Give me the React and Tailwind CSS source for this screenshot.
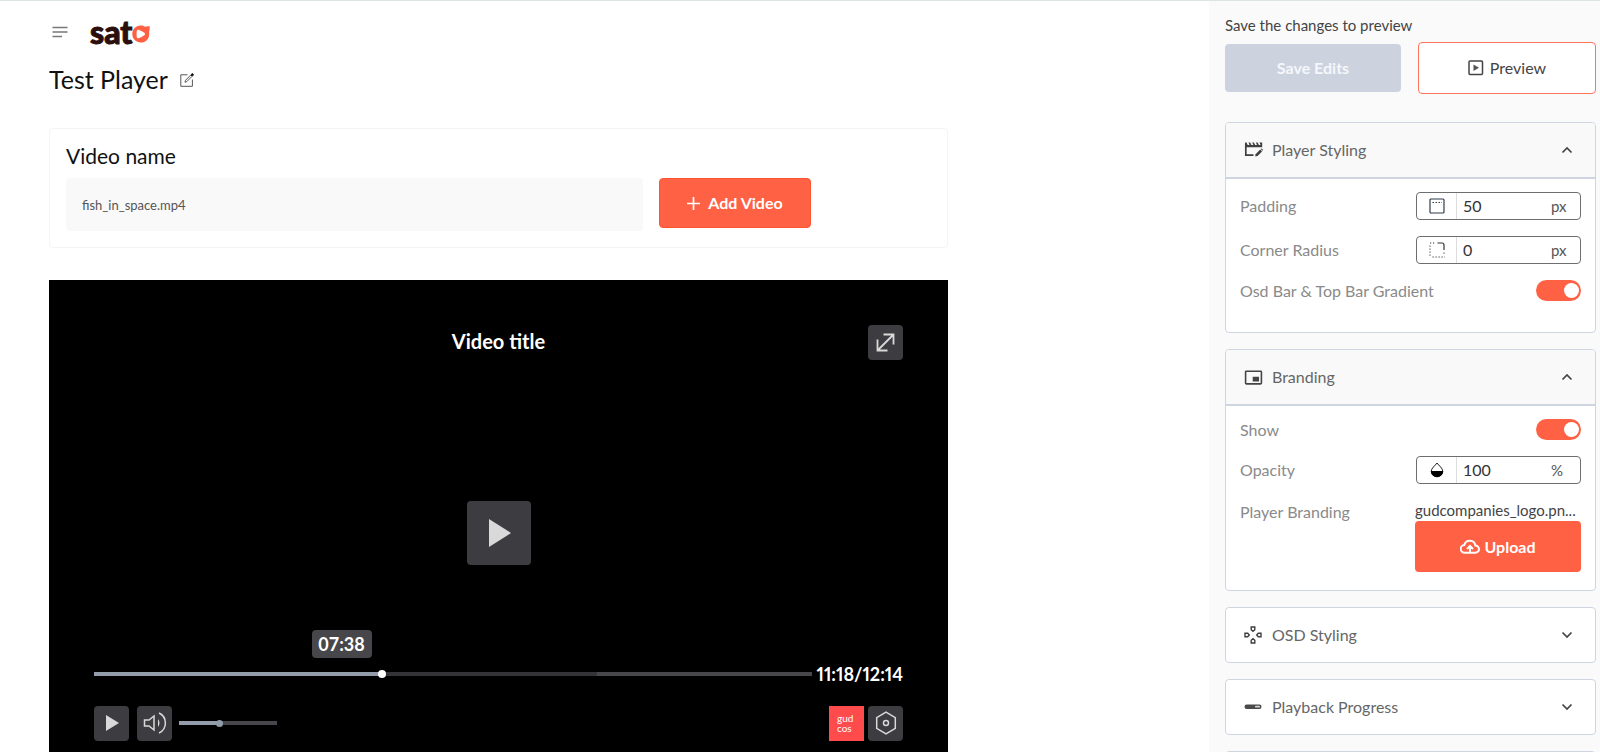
import { useState } from 'react'
import { MdPictureInPictureAlt } from 'react-icons/md'

const iconButton = 'flex size-[35px] items-center justify-center rounded-sm bg-[#3c3c41] text-[#d9d9d9]'

function MenuIcon() {
  return (
    <svg width="16" height="12" viewBox="0 0 16 12" stroke="#777" strokeWidth="1.3">
      <path d="M0.5 1.5h15M0.5 6h15M0.5 10.5h9.5" />
    </svg>
  )
}

function Logo() {
  return (
    <a href="#" aria-label="sato" className="flex h-8 items-center text-[32px] leading-8 font-black text-[#2a0f0d] [-webkit-text-stroke:1px_#2a0f0d]">
      sat
      <svg width="18" height="18" viewBox="0 0 18 18" className="mt-1">
        <path
          fill="#ff6044"
          fillRule="evenodd"
          d="M8.5 0.6c2 0 3.400 .5 4.400 1.100L17.600 1v4.200c-.6 1-.4 2-.4 4 0 4.800-3.600 8.300-8.400 8.300S.3 14 .3 9.100 3.800 .6 8.500 .6zM7 4.900c-1.200-.4-2.200.3-2.300 1.500-.2 1.800-.2 3.500 0 5.300.2 1.300 1.400 1.900 2.600 1.400 1.900-.8 3.600-1.700 5-2.800 1-.8 1-1.800 0-2.600C10.800 6.500 9 5.600 7 4.900z"
        />
      </svg>
    </a>
  )
}

function EditIcon() {
  return (
    <svg width="14" height="14" viewBox="0 0 14 14" fill="none" stroke="#555">
      <path d="M7.500 1.800H.8v11.500h11.600V6.500" />
      <path d="M5 9.300l.5-2L10.800 2l1.300 1.300-5.300 5.300z" />
      <path d="M11 1.800l1.400-1.300 1.200 1.200-1.300 1.400z" fill="#111" stroke="#111" />
    </svg>
  )
}

function PreviewIcon() {
  return (
    <svg width="16" height="16" viewBox="0 0 16 16">
      <rect x="1" y="1" width="13.500" height="13.500" rx="1" fill="none" stroke="#444" strokeWidth="1.500" />
      <path d="M5.500 4.500v6.500L11 7.750z" fill="#555" />
    </svg>
  )
}

function ClapperIcon() {
  return (
    <svg width="20" height="18" viewBox="0 0 20 18" fill="none">
      <path d="M1.800 3v11.200h7.700" stroke="#3f3f3f" strokeWidth="1.700" />
      <path d="M1 1.500h1.500l1.200 2.500h1.800L4.500 1.500h1.700L7.500 4h1.800L8.200 1.500h1.700L11.200 4H13l-1.100-2.500h1.700L14.900 4h1.700l-1.100-2.500h2.700V6.300H1z" fill="#3f3f3f" />
      <path d="M11.300 15.500l.3-2.300 4.600-4.600 1.900 1.900-4.600 4.600z" fill="#3f3f3f" />
      <path d="M16.800 8l.8-.6 1.600 1.600-.7.800z" fill="#3f3f3f" />
    </svg>
  )
}

function DpadIcon() {
  return (
    <svg width="18" height="18" viewBox="0 0 18 18" fill="none" stroke="#3f3f3f" strokeWidth="1.400">
      <path d="M7.200 1h3.600v2.700L9 5.300 7.200 3.700z" />
      <path d="M7.200 17h3.600v-2.700L9 12.700l-1.800 1.600z" />
      <path d="M1 7.200v3.600h2.700L5.300 9 3.700 7.200z" />
      <path d="M17 7.200v3.600h-2.700L12.700 9l1.600-1.800z" />
    </svg>
  )
}

function ProgressIcon() {
  return (
    <svg width="18" height="6" viewBox="0 0 18 6">
      <rect x=".5" y=".5" width="17" height="4.500" rx="2.200" fill="#4a4a4a" />
      <rect x="11" y="1.800" width="5" height="1.800" rx=".9" fill="#d4d4d4" />
    </svg>
  )
}

function PaddingIcon() {
  return (
    <svg width="16" height="16" viewBox="0 0 16 16" fill="none" stroke="#2f3a4a">
      <rect x="1" y="1" width="14" height="14" rx="1" strokeWidth="1.200" />
      <path d="M3.500 4.500h9.500" strokeDasharray="1.500 1.500" />
    </svg>
  )
}

function RadiusIcon() {
  return (
    <svg width="16" height="16" viewBox="0 0 16 16" fill="none" stroke="#333">
      <path d="M8.500 1H13q2 0 2 2v5" strokeWidth="1.200" />
      <path d="M1 1h6M1 3.500v11.500M3.500 15H16M15 10.500v3" strokeDasharray="1.200 1.800" />
    </svg>
  )
}

function DropIcon() {
  return (
    <svg width="14" height="16" viewBox="0 0 14 16">
      <path d="M7 1C5.200 3.500 1.200 6.300 1.200 9.300a5.800 5.500 0 0 0 11.600 0C12.800 6.300 8.800 3.500 7 1z" fill="none" stroke="#222" />
      <path d="M1 9h12c.2 3.500-2.700 6-6 6S.8 12.500 1 9z" fill="#000" />
    </svg>
  )
}

function UploadIcon() {
  return (
    <svg width="20" height="16" viewBox="0 0 20 16" fill="none" stroke="#fff" strokeWidth="2">
      <path d="M10 13.700H4.800A3.800 3.800 0 0 1 4.300 6 5.700 5.700 0 0 1 15.400 6.600a3.500 3.500 0 0 1 .1 7.100H10" />
      <path d="M10 14V7.300M7 10l3-3 3 3" />
    </svg>
  )
}

function Chevron({ open }) {
  return (
    <svg width="12" height="8" viewBox="0 0 12 8" fill="none" stroke="#444" strokeWidth="1.700">
      <path d={open ? 'M1.500 6.500L6 2l4.500 4.500' : 'M1.500 1.500L6 6l4.500-4.500'} />
    </svg>
  )
}

function Panel({ icon, title, defaultOpen = false, children }) {
  const [open, setOpen] = useState(defaultOpen)
  return (
    <section className="overflow-hidden rounded border border-[#cfd5e0] bg-white">
      <button
        type="button"
        aria-expanded={open}
        onClick={() => setOpen(!open)}
        className={`flex w-full items-center pr-[22px] pl-[18px] ${open ? 'h-14 border-b-2 border-[#cfd5e0] bg-[#f9f9f9]' : 'h-[54px]'}`}
      >
        <span className="flex w-7 items-center text-[#444]">{icon}</span>
        <span className="flex-1 text-left text-base text-[#666]">{title}</span>
        <Chevron open={open} />
      </button>
      {open && children}
    </section>
  )
}

function UnitField({ id, label, icon, unit, value, onChange }) {
  return (
    <div className="flex h-7 items-center justify-between">
      <label htmlFor={id} className="text-base text-[#8a8a8a]">{label}</label>
      <div className="flex h-7 w-[165px] items-center rounded border border-[#6e6e6e]">
        <span className="flex h-full w-10 items-center justify-center border-r border-[#ddd]">{icon}</span>
        <input
          id={id}
          value={value}
          onChange={(e) => onChange(e.target.value)}
          className="min-w-0 flex-1 pl-1.5 text-base text-[#333] outline-none"
        />
        <span className="w-[29px] text-[15px] text-[#555]">{unit}</span>
      </div>
    </div>
  )
}

function Toggle({ id, label }) {
  return (
    <div className="flex h-[21px] items-center justify-between">
      <label htmlFor={id} className="text-base text-[#8a8a8a]">{label}</label>
      <input
        id={id}
        type="checkbox"
        role="switch"
        defaultChecked
        className="flex h-[21px] w-[45px] appearance-none items-center rounded-full bg-gray-300 px-0.5 before:size-[15px] before:rounded-full before:bg-white checked:justify-end checked:bg-[#ff6144]"
      />
    </div>
  )
}

function Player() {
  const [position, setPosition] = useState(40)
  const [volume, setVolume] = useState(41)

  return (
    <div className="relative flex aspect-video w-full flex-col justify-between bg-black p-[45px] text-white">
      <div className="grid grid-cols-[35px_1fr_35px] items-start">
        <h2 className="col-start-2 text-center text-xl leading-8 font-bold">Video title</h2>
        <button type="button" aria-label="Fullscreen" className={iconButton}>
          <svg width="19" height="19" viewBox="0 0 19 19" fill="none" stroke="currentColor" strokeWidth="1.800">
            <path d="M1.500 6.500v11h10M7.500 1.500h10v10M1.500 17.500l16-16" />
          </svg>
        </button>
      </div>

      <button
        type="button"
        aria-label="Play video"
        className="absolute top-1/2 left-1/2 flex size-16 -translate-x-1/2 -translate-y-1/2 items-center justify-center rounded-sm bg-[#3c3c41]"
      >
        <svg width="24" height="28" viewBox="0 0 24 28">
          <path d="M2 0v28l22-14z" fill="#d9d9d9" />
        </svg>
      </button>

      <div>
        <div className="flex h-7 items-center gap-[5px]">
          <div className="relative flex h-7 flex-1 items-center">
            <output className="absolute bottom-[30px] left-[34.5%] flex h-7 w-[60px] -translate-x-1/2 items-center justify-center rounded bg-[#47474b] text-lg font-bold">
              07:38
            </output>
            <input
              type="range"
              aria-label="Seek"
              value={position}
              onChange={(e) => setPosition(Number(e.target.value))}
              style={{ backgroundImage: `linear-gradient(to right, #929cab ${position}%, #343438 ${position}%, #343438 70%, #47474b 70%)` }}
              className="h-1 w-full appearance-none [&::-webkit-slider-thumb]:size-2 [&::-webkit-slider-thumb]:appearance-none [&::-webkit-slider-thumb]:rounded-full [&::-webkit-slider-thumb]:bg-white"
            />
          </div>
          <span className="text-lg font-bold proportional-nums">11:18/12:14</span>
        </div>

        <div className="mt-[18px] flex items-center">
          <button type="button" aria-label="Play" className={iconButton}>
            <svg width="14" height="16" viewBox="0 0 14 16">
              <path d="M1 0v16l13-8z" fill="currentColor" />
            </svg>
          </button>
          <button type="button" aria-label="Mute" className={`ml-2 ${iconButton}`}>
            <svg width="24" height="24" viewBox="0 0 24 24" fill="none" stroke="currentColor" strokeWidth="1.500">
              <path d="M1.500 9h4.500l5-4v14l-5-4H1.500z" />
              <path d="M15 8q3 4 0 8z" fill="currentColor" stroke="none" />
              <path d="M16 2c8.500 4 8.500 16 0 20" />
            </svg>
          </button>
          <input
            type="range"
            aria-label="Volume"
            value={volume}
            onChange={(e) => setVolume(Number(e.target.value))}
            style={{ backgroundImage: `linear-gradient(to right, #929cab ${volume}%, #47474b ${volume}%)` }}
            className="ml-[7px] h-1 w-[98px] appearance-none [&::-webkit-slider-thumb]:size-[7px] [&::-webkit-slider-thumb]:appearance-none [&::-webkit-slider-thumb]:rounded-full [&::-webkit-slider-thumb]:bg-[#929cab]"
          />
          <div className="ml-auto flex size-[35px] flex-col justify-center bg-[#ff4b4b] pl-2 text-[10px] leading-[10px] text-white">
            <span>gud</span>
            <span>cos</span>
          </div>
          <button type="button" aria-label="Settings" className={`ml-1 ${iconButton}`}>
            <svg width="22" height="24" viewBox="0 0 22 24" fill="none" stroke="currentColor" strokeWidth="1.500">
              <path d="M11 1.200l9.300 5.400v10.800L11 22.800l-9.300-5.400V6.600z" />
              <circle cx="11" cy="12" r="2.500" />
            </svg>
          </button>
        </div>
      </div>
    </div>
  )
}

export default function App() {
  const [padding, setPadding] = useState('50')
  const [radius, setRadius] = useState('0')
  const [opacity, setOpacity] = useState('100')

  return (
    <div className="flex h-screen overflow-hidden border-t border-[#dbe6e2] bg-white font-['Lato',sans-serif]">
      <main className="min-w-0 flex-1 pt-[15px] pl-[49px]">
        <header className="flex h-8 items-center gap-[22px] pl-[3px]">
          <button type="button" aria-label="Menu"><MenuIcon /></button>
          <Logo />
        </header>

        <div className="mt-4 flex h-8 items-center gap-3">
          <h1 className="text-[25px] text-[#111]">Test Player</h1>
          <button type="button" aria-label="Rename player"><EditIcon /></button>
        </div>

        <div className="mt-8 max-w-[899px]">
          <div className="rounded border border-[#f4f4f4] px-4 pt-[13px] pb-4">
            <label htmlFor="video-name" className="block text-[21px] leading-7 text-[#111]">Video name</label>
            <div className="mt-2 flex items-start gap-4">
              <input
                id="video-name"
                readOnly
                value="fish_in_space.mp4"
                className="h-[53px] w-[577px] rounded bg-[#f9f9f9] px-4 text-[13px] text-[#555]"
              />
              <button
                type="button"
                className="flex h-[50px] w-[152px] items-center justify-center gap-2 rounded-sm border border-[#ff5430] bg-[#ff6144] text-base font-bold text-white"
              >
                <svg width="13" height="13" viewBox="0 0 13 13" stroke="#fff" strokeWidth="1.700">
                  <path d="M6.500 0v13M0 6.500h13" />
                </svg>
                Add Video
              </button>
            </div>
          </div>
          <div className="mt-8">
            <Player />
          </div>
        </div>
      </main>

      <aside className="w-[391px] shrink-0 bg-[#fafafa] pt-3.5 pr-1 pl-4">
        <p className="text-[15px] leading-5 text-[#444]">Save the changes to preview</p>
        <div className="mt-[7px] flex items-center gap-[17px]">
          <button type="button" disabled className="h-12 flex-1 rounded-sm bg-[#ccd3df] text-base font-bold text-[#f5f7fa]">
            Save Edits
          </button>
          <button type="button" className="flex h-[52px] flex-1 items-center justify-center gap-1.5 rounded-sm border border-[#ff7359] bg-white text-base text-[#444]">
            <PreviewIcon />
            Preview
          </button>
        </div>

        <div className="mt-7 flex flex-col gap-4">
          <Panel icon={<ClapperIcon />} title="Player Styling" defaultOpen>
            <div className="flex flex-col gap-4 px-3.5 pt-[13px] pb-[31px]">
              <UnitField id="padding" label="Padding" icon={<PaddingIcon />} unit="px" value={padding} onChange={setPadding} />
              <UnitField id="radius" label="Corner Radius" icon={<RadiusIcon />} unit="px" value={radius} onChange={setRadius} />
              <Toggle id="gradient" label="Osd Bar & Top Bar Gradient" />
            </div>
          </Panel>

          <Panel icon={<MdPictureInPictureAlt size={19} />} title="Branding" defaultOpen>
            <div className="flex flex-col gap-4 px-3.5 pt-[13px] pb-[18px]">
              <Toggle id="show" label="Show" />
              <UnitField id="opacity" label="Opacity" icon={<DropIcon />} unit="%" value={opacity} onChange={setOpacity} />
              <div className="flex justify-between">
                <span className="text-base text-[#8a8a8a]">Player Branding</span>
                <div className="w-[166px]">
                  <p className="truncate text-[15px] leading-[21px] text-[#444]">gudcompanies_logo.pn...</p>
                  <button type="button" className="flex h-[51px] w-full items-center justify-center gap-1 rounded-sm bg-[#ff6144] text-base font-bold text-white">
                    <UploadIcon />
                    Upload
                  </button>
                </div>
              </div>
            </div>
          </Panel>

          <Panel icon={<DpadIcon />} title="OSD Styling" />
          <Panel icon={<ProgressIcon />} title="Playback Progress" />
          <Panel icon={<ProgressIcon />} />
        </div>
      </aside>
    </div>
  )
}
